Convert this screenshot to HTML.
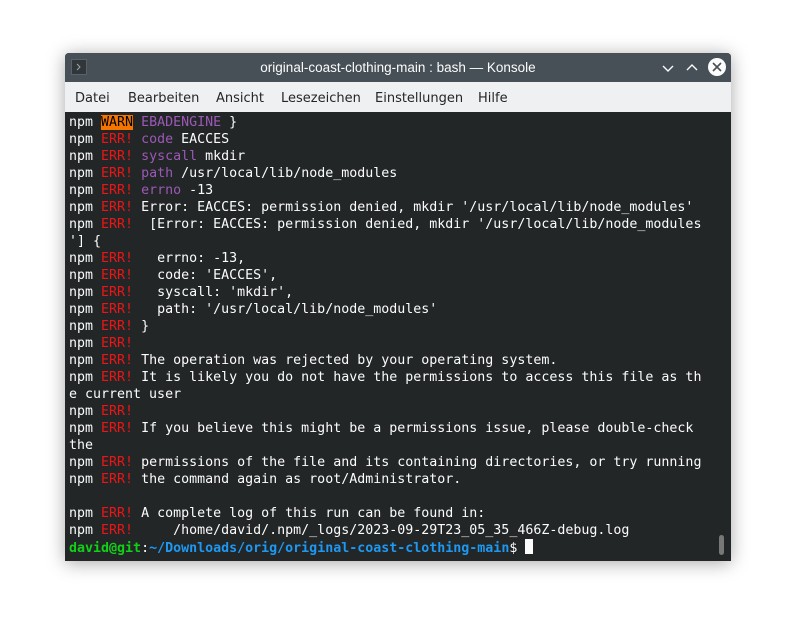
<!DOCTYPE html>
<html><head><style>
body{margin:0;width:796px;height:639px;background:#fff;position:relative;overflow:hidden}
.win{position:absolute;left:65px;top:53px;width:666px;height:508px;box-shadow:0 2px 18px rgba(0,0,0,.35);border-radius:4px 4px 0 0;overflow:hidden;background:#232627}
.title{height:29px;background:#475057;color:#fcfcfc;font:13.5px "Liberation Sans","DejaVu Sans",sans-serif;text-align:center;line-height:30px;position:relative}
.ico{position:absolute;left:6px;top:6px;width:16px;height:16px;background:#31363b;border:1px solid #5a6168;box-sizing:border-box}
.menu{height:30px;background:#eff0f1;color:#232627;font:13px "DejaVu Sans","Liberation Sans",sans-serif;line-height:33px;position:relative}
.menu span{position:absolute}
pre{margin:0;padding:0 0 0 4px;font:13.3px/17px "DejaVu Sans Mono","Liberation Mono",monospace;color:#fcfcfc;position:absolute;top:61px;left:0}
.r{color:#ed1515}.p{color:#9b59b6}.w{background:#f67400;color:#000}
.g{color:#11d116;font-weight:bold}.b{color:#1d99f3;font-weight:bold}
.cur{display:inline-block;width:8px;height:15px;background:#fcfcfc;vertical-align:-2px}
.sb{position:absolute;right:7px;top:482px;width:5px;height:20px;border-radius:3px;background:#777}
</style></head><body>
<div class="win">
<div class="title"><div class="ico"><svg width="14" height="14" style="position:absolute;left:0;top:0"><path d="M5 4l3 3-3 3" stroke="#9aa" stroke-width="1" fill="none"/></svg></div>original-coast-clothing-main : bash — Konsole
<svg style="position:absolute;left:596px;top:8px" width="14" height="14"><path d="M2 5l5 5 5-5" stroke="#fcfcfc" stroke-width="1.4" fill="none"/></svg>
<svg style="position:absolute;left:620px;top:8px" width="14" height="14"><path d="M2 9l5-5 5 5" stroke="#fcfcfc" stroke-width="1.4" fill="none"/></svg>
<svg style="position:absolute;left:642px;top:4px" width="20" height="20"><circle cx="10" cy="10" r="9" fill="#fcfcfc"/><path d="M6 6l8 8M14 6l-8 8" stroke="#475057" stroke-width="1.6"/></svg>
</div>
<div class="menu"><span style="left:10px">Datei</span><span style="left:63px">Bearbeiten</span><span style="left:151px">Ansicht</span><span style="left:216px">Lesezeichen</span><span style="left:310px">Einstellungen</span><span style="left:413px">Hilfe</span></div>
<pre>npm <span class="w">WARN</span> <span class="p">EBADENGINE</span> }
npm <span class="r">ERR!</span> <span class="p">code</span> EACCES
npm <span class="r">ERR!</span> <span class="p">syscall</span> mkdir
npm <span class="r">ERR!</span> <span class="p">path</span> /usr/local/lib/node_modules
npm <span class="r">ERR!</span> <span class="p">errno</span> -13
npm <span class="r">ERR!</span> Error: EACCES: permission denied, mkdir '/usr/local/lib/node_modules'
npm <span class="r">ERR!</span>  [Error: EACCES: permission denied, mkdir '/usr/local/lib/node_modules
'] {
npm <span class="r">ERR!</span>   errno: -13,
npm <span class="r">ERR!</span>   code: 'EACCES',
npm <span class="r">ERR!</span>   syscall: 'mkdir',
npm <span class="r">ERR!</span>   path: '/usr/local/lib/node_modules'
npm <span class="r">ERR!</span> }
npm <span class="r">ERR!</span>
npm <span class="r">ERR!</span> The operation was rejected by your operating system.
npm <span class="r">ERR!</span> It is likely you do not have the permissions to access this file as th
e current user
npm <span class="r">ERR!</span>
npm <span class="r">ERR!</span> If you believe this might be a permissions issue, please double-check
the
npm <span class="r">ERR!</span> permissions of the file and its containing directories, or try running
npm <span class="r">ERR!</span> the command again as root/Administrator.

npm <span class="r">ERR!</span> A complete log of this run can be found in:
npm <span class="r">ERR!</span>     /home/david/.npm/_logs/2023-09-29T23_05_35_466Z-debug.log
<span class="g">david@git</span>:<span class="b">~/Downloads/orig/original-coast-clothing-main</span>$ <span class="cur"></span></pre>
<div class="sb"></div>
</div>
</body></html>
